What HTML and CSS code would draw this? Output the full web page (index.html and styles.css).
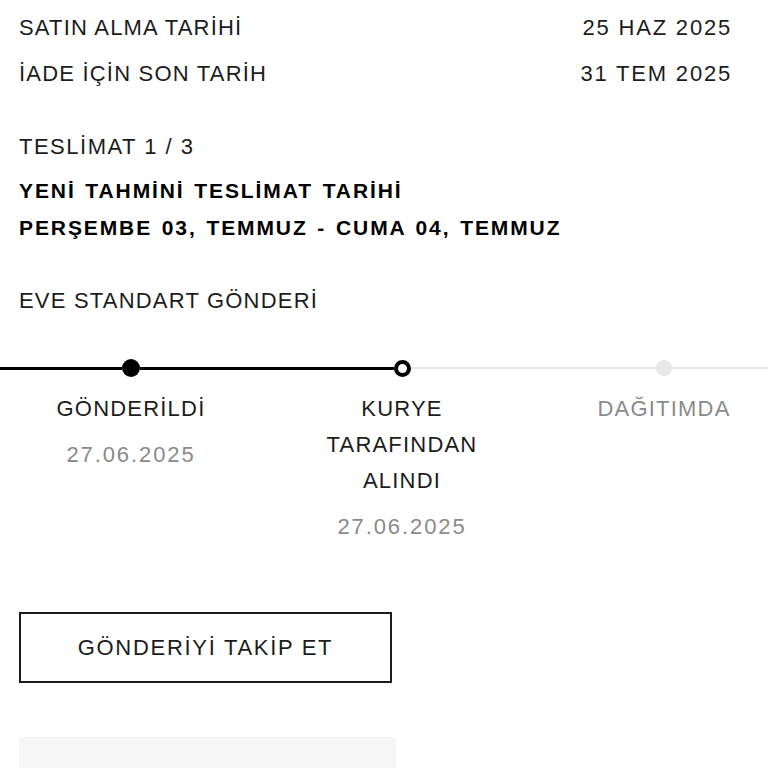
FILE: index.html
```html
<!DOCTYPE html>
<html lang="tr">
<head>
  <meta charset="UTF-8">
  <title>Sipariş detayı</title>
  <link rel="stylesheet" href="styles.css">
</head>
<body>
  <div class="order-info">
    <div class="info-row">
      <span>SATIN ALMA TARİHİ</span>
      <span class="info-value">25 HAZ 2025</span>
    </div>
    <div class="info-row">
      <span>İADE İÇİN SON TARİH</span>
      <span class="info-value">31 TEM 2025</span>
    </div>
  </div>

  <div class="delivery">
    <div class="delivery-count">TESLİMAT 1 / 3</div>
    <div class="delivery-date">
      <div>YENİ TAHMİNİ TESLİMAT TARİHİ</div>
      <div>PERŞEMBE 03, TEMMUZ - CUMA 04, TEMMUZ</div>
    </div>
    <div class="delivery-type">EVE STANDART GÖNDERİ</div>
  </div>

  <div class="timeline">
    <div class="step">
      <div class="rail">
        <span class="seg done"></span>
        <span class="dot filled"></span>
        <span class="seg done"></span>
      </div>
      <div class="step-label">GÖNDERİLDİ</div>
      <div class="step-date">27.06.2025</div>
    </div>
    <div class="step">
      <div class="rail">
        <span class="seg done"></span>
        <span class="dot current"></span>
        <span class="seg"></span>
      </div>
      <div class="step-label">KURYE<br>TARAFINDAN<br>ALINDI</div>
      <div class="step-date">27.06.2025</div>
    </div>
    <div class="step">
      <div class="rail">
        <span class="seg"></span>
        <span class="dot pending"></span>
        <span class="seg"></span>
      </div>
      <div class="step-label muted">DAĞITIMDA</div>
    </div>
  </div>

  <div class="actions">
    <button class="track-button">GÖNDERİYİ TAKİP ET</button>
  </div>

  <div class="next-card"></div>
</body>
</html>
```

FILE: styles.css
```css
body {
  font-family: "Liberation Sans", Arial, Helvetica, sans-serif;
  font-size: 22px;
  letter-spacing: 1.2px;
  color: #1c1c1c;
  background-color: #fff;
  margin: 0;
  overflow: hidden;
}

/* Order dates */
.order-info {
  padding: 5px 37px 0 19px;
}

.info-row {
  display: flex;
  justify-content: space-between;
  line-height: 46px;
}

.info-value {
  letter-spacing: 1.8px;
  margin-right: -1px;
}

/* Delivery block */
.delivery {
  padding: 0 19px;
  margin-top: 31px;
}

.delivery-count {
  line-height: 37px;
  letter-spacing: 1.5px;
}

.delivery-date {
  margin-top: 7px;
  font-size: 21px;
  font-weight: bold;
  letter-spacing: 1.9px;
  word-spacing: 2px;
  line-height: 37px;
  color: #000;
}

.delivery-type {
  margin-top: 36px;
  line-height: 37px;
}

/* Tracking timeline */
.timeline {
  display: grid;
  grid-template-columns: 262px 280px 244px;
  margin-top: 40px;
  text-align: center;
}

.rail {
  display: flex;
  align-items: center;
  height: 18px;
  margin-bottom: 14px;
}

.seg {
  flex: 1;
  height: 2px;
  background-color: #e6e6e6;
}

.seg.done {
  height: 3px;
  background-color: #000;
}

.dot {
  box-sizing: border-box;
  border-radius: 50%;
}

.dot.filled {
  width: 18px;
  height: 18px;
  background-color: #000;
}

.dot.current {
  width: 17px;
  height: 17px;
  border: 4px solid #000;
  background-color: #fff;
}

.dot.pending {
  width: 16px;
  height: 16px;
  background-color: #e8e8e8;
}

.step-label {
  line-height: 36px;
}

.step-label.muted {
  color: #8a8a8a;
}

.step-date {
  margin-top: 10px;
  line-height: 36px;
  letter-spacing: 1.9px;
  color: #8a8a8a;
}

/* Buttons */
.actions {
  padding: 0 19px;
  margin-top: 67px;
}

.track-button {
  width: 373px;
  height: 71px;
  border: 2px solid #1c1c1c;
  background-color: #fff;
  font-family: inherit;
  font-size: 22px;
  letter-spacing: 1.7px;
  color: #1c1c1c;
  padding: 0;
}

.next-card {
  width: 377px;
  height: 80px;
  margin: 54px 0 0 19px;
  background-color: #f6f6f6;
}
```
